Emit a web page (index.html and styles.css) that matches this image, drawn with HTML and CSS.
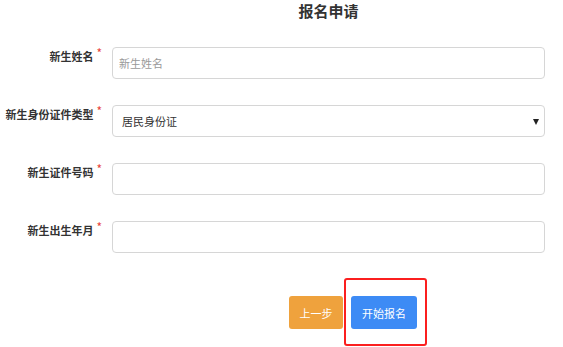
FILE: index.html
```html
<!DOCTYPE html>
<html lang="zh-CN">
<head>
<meta charset="utf-8">
<title>报名申请</title>
<link rel="stylesheet" href="styles.css">
</head>
<body>
<div class="page">
  <div class="title-row">
    <div></div>
    <h1 class="title">报名申请</h1>
  </div>
  <form class="form">
    <div class="row">
      <label class="label">新生姓名<span class="req">*</span></label>
      <input class="control" type="text" placeholder="新生姓名">
    </div>
    <div class="row">
      <label class="label">新生身份证件类型<span class="req">*</span></label>
      <div class="select-wrap">
        <select class="control select">
          <option>居民身份证</option>
        </select>
      </div>
    </div>
    <div class="row">
      <label class="label">新生证件号码<span class="req">*</span></label>
      <input class="control" type="text">
    </div>
    <div class="row">
      <label class="label">新生出生年月<span class="req">*</span></label>
      <input class="control" type="text">
    </div>
    <div class="actions">
      <button type="button" class="btn btn-warning">上一步</button>
      <span class="highlight">
        <button type="button" class="btn btn-primary">开始报名</button>
      </span>
    </div>
  </form>
</div>
</body>
</html>
```

FILE: styles.css
```css
* { box-sizing: border-box; }
html, body {
  margin: 0;
  padding: 0;
  background: #fff;
  overflow: hidden;
}
body {
  font-family: "Microsoft YaHei", "Noto Sans CJK SC", "Noto Sans", sans-serif;
  color: #333;
  font-size: 11px;
}
.page {
  width: 563px;
  height: 347px;
}
.title-row {
  display: grid;
  grid-template-columns: 112px 433px;
}
.title {
  margin: 0;
  font-size: 15px;
  line-height: 22px;
  font-weight: bold;
  text-align: center;
  color: #333;
}
.form {
  display: flex;
  flex-direction: column;
  gap: 26px;
  padding-top: 25px;
}
.row {
  display: grid;
  grid-template-columns: 112px 433px;
  align-items: start;
}
.label {
  text-align: right;
  padding-right: 10px;
  padding-top: 1px;
  font-weight: bold;
  font-size: 11px;
  line-height: 16px;
  color: #333;
  white-space: nowrap;
}
.req {
  color: #e8453c;
  font-size: 12px;
  font-weight: normal;
  vertical-align: top;
  margin-left: 3px;
  position: relative;
  top: -3px;
}
.control {
  display: block;
  width: 100%;
  height: 32px;
  border: 1px solid #d6d6d6;
  border-radius: 4px;
  padding: 0 6px;
  font-family: inherit;
  font-size: 11px;
  color: #333;
  background: #fff;
  outline: none;
  margin: 0;
}
.control::placeholder {
  color: #999;
}
.select-wrap {
  position: relative;
}
.select {
  appearance: none;
  -webkit-appearance: none;
  padding-left: 9px;
}
.select-wrap::after {
  content: "";
  position: absolute;
  right: 6px;
  top: 14px;
  border-left: 3px solid transparent;
  border-right: 3px solid transparent;
  border-top: 6px solid #222;
  pointer-events: none;
}
.actions {
  display: flex;
  gap: 8px;
  padding-left: 289px;
  margin-top: 17px;
}
.btn {
  height: 33px;
  border: none;
  border-radius: 3px;
  color: #fff;
  font-family: inherit;
  font-size: 11px;
  padding: 0;
  text-align: center;
  white-space: nowrap;
  cursor: pointer;
}
.btn-warning {
  background: #efa23d;
  width: 54px;
}
.btn-primary {
  background: #3d8bf5;
  width: 66px;
}
.highlight {
  position: relative;
  display: inline-block;
}
.highlight::after {
  content: "";
  position: absolute;
  top: -18px;
  left: -7px;
  right: -10px;
  bottom: -17px;
  border: 2.5px solid #fb1f1f;
  border-radius: 3px;
  pointer-events: none;
}
```
